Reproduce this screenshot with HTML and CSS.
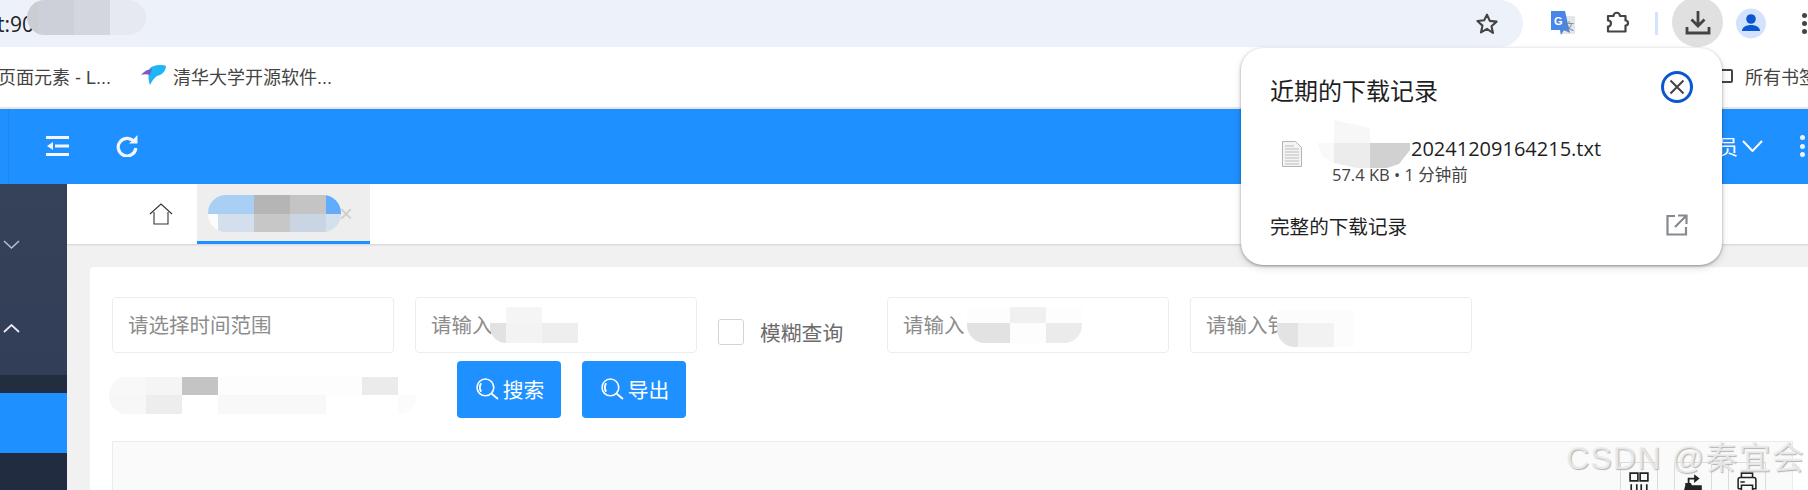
FILE: index.html
```html
<!DOCTYPE html>
<html lang="zh">
<head>
<meta charset="utf-8">
<title>近期的下载记录</title>
<link rel="stylesheet" href="styles.css">
</head>
<body>
<div class="screen">
  <div class="toolbar">
    <div class="omnibox">
      <span class="url">t:90</span>
      <svg class="star" viewBox="0 0 24 24"><path d="M12 2.6l2.8 6.3 6.8.7-5.1 4.6 1.5 6.8L12 16.9l-6 3.5 1.5-6.8-5.1-4.6 6.8-.7z" fill="none" stroke="#444" stroke-width="2.1" stroke-linejoin="round"/></svg>
    </div>
    <svg class="translate" viewBox="0 0 25 24"><rect x="10" y="5" width="15" height="18" fill="#e4e6e8"/><path d="M1 0h14l5 22-6-3-3 5-1-5H1z" fill="#4a86e8"/><text class="translate-g" x="4" y="14">G</text><text class="translate-zh" x="14" y="19">文</text></svg>
    <svg class="puzzle" viewBox="0 0 25 22"><path d="M2 5H7.500a3.200 3.200 0 0 1 6.500 0H19.500V9.500a2.500 2.500 0 0 1 0 5V20.500H2V15.500a3 3 0 0 0 0-6z" fill="none" stroke="#444" stroke-width="2.200" stroke-linejoin="round"/></svg>
    <span class="separator"></span>
    <span class="download-button">
      <svg class="download-icon" viewBox="0 0 26 26"><path d="M13 2v15M6.500 10.500L13 17l6.500-6.500M2 18v6h22v-6" fill="none" stroke="#444" stroke-width="2.800"/></svg>
    </span>
    <svg class="avatar" viewBox="0 0 30 31"><circle cx="15" cy="15.500" r="15" fill="#d3e3fd"/><circle cx="15" cy="11" r="4.800" fill="#0b57d0"/><path d="M6 23c0-4 4.500-6 9-6s9 2 9 6z" fill="#0b57d0"/></svg>
    <span class="kebab kebab-dark"><i></i><i></i><i></i></span>
  </div>

  <div class="bookmarks">
    <span class="bookmark bookmark-first">页面元素 - L...</span>
    <svg class="fish" viewBox="0 0 25 20"><path d="M9 3C13 0 20-1 25 1 25 6 21 10 16 11 13 13 11 16 9 20 7 15 7 8 9 3z" fill="#1fb6f6"/><path d="M0 10C3 6 7 4 11 4L9 10C6 9 3 9 0 10z" fill="#7c5cc4"/></svg>
    <span class="bookmark bookmark-long">清华大学开源软件...</span>
    <span class="bookmark-end"><span class="folder"></span>所有书签</span>
  </div>

  <div class="app">
    <header class="app-header">
      <span class="header-line"></span>
      <svg class="collapse" viewBox="0 0 23 20"><path d="M0 1.500h23M9 10h14M0 18.500h23" stroke="#f2f5fa" stroke-width="3" fill="none"/><path d="M1 10l6-4v8z" fill="#f2f5fa"/></svg>
      <svg class="reload" viewBox="0 0 22 22"><path d="M18.500 7.500A8.800 8.800 0 1 0 19.800 13" fill="none" stroke="#f2f5fa" stroke-width="3.200"/><path d="M13 8.500h8.500V0z" fill="#f2f5fa"/></svg>
      <div class="user">
        <span>管理员</span>
        <svg class="user-chevron" viewBox="0 0 21 12"><path d="M1 1l9.500 10L20 1" fill="none" stroke="#fff" stroke-width="2"/></svg>
        <span class="kebab kebab-light"><i></i><i></i><i></i></span>
      </div>
    </header>

    <div class="app-body">
      <aside class="sidebar">
        <div class="side-group">
          <svg class="side-chevron dim" viewBox="0 0 17 9"><path d="M1 1l7.500 7L16 1" fill="none" stroke="#b9c0cc" stroke-width="1.500"/></svg>
          <svg class="side-chevron" viewBox="0 0 17 9"><path d="M1 8l7.500-7L16 8" fill="none" stroke="#e8ebf0" stroke-width="1.800"/></svg>
        </div>
        <div class="side-dark"></div>
        <div class="side-active"></div>
      </aside>

      <main class="content">
        <nav class="tabs">
          <svg class="home" viewBox="0 0 24 22"><path d="M1 11L12 1l11 10M5 9v12h14V9" fill="none" stroke="#333" stroke-width="1.100"/></svg>
          <div class="tab"><span class="tab-close">×</span></div>
        </nav>

        <section class="card">
          <div class="filters">
            <div class="field">请选择时间范围</div>
            <div class="field">请输入</div>
            <label class="fuzzy"><span class="checkbox"></span><span>模糊查询</span></label>
            <div class="field">请输入</div>
            <div class="field">请输入钅</div>
          </div>
          <div class="actions">
            <button class="btn">
              <svg class="btn-icon" viewBox="0 0 22 21"><circle cx="9" cy="9" r="8" fill="none" stroke="#fff" stroke-width="1.500"/><path d="M5 5a7 7 0 0 0 0 8M15 15l6 5" fill="none" stroke="#fff" stroke-width="1.800"/></svg>搜索
            </button>
            <button class="btn">
              <svg class="btn-icon" viewBox="0 0 22 21"><circle cx="9" cy="9" r="8" fill="none" stroke="#fff" stroke-width="1.500"/><path d="M5 5a7 7 0 0 0 0 8M15 15l6 5" fill="none" stroke="#fff" stroke-width="1.800"/></svg>导出
            </button>
          </div>
          <div class="table">
            <div class="table-tools">
              <span class="tool">
                <svg class="tool-icon" viewBox="0 0 18 18"><path d="M1 1h7v7H1zM10 1h7v7h-7zM2 11v8M7 11v8M11 11v8M16 11v8" fill="none" stroke="#222" stroke-width="1.500"/></svg>
              </span>
              <span class="tool">
                <svg class="tool-icon tool-export" viewBox="0 0 20 20"><path d="M3 10h5l1 2h9v8H1l2-8z" fill="#222"/><path d="M6 10V6h6" fill="none" stroke="#222" stroke-width="1.600"/><path d="M11 2l5 4-5 4z" fill="#222"/></svg>
              </span>
              <span class="tool">
                <svg class="tool-icon" viewBox="0 0 18 18"><path d="M4 5V1h10v4M1 15V7a2 2 0 0 1 2-2h12a2 2 0 0 1 2 2v8h-3M4 15H1M4 12h10v7H4zM3 9h4" fill="none" stroke="#222" stroke-width="1.400"/></svg>
              </span>
            </div>
          </div>
        </section>
      </main>
    </div>
  </div>

  <div class="mosaic m-url"></div>
  <div class="mosaic m-tab"></div>
  <div class="mosaic m-field-two"></div>
  <div class="mosaic m-field-three"></div>
  <div class="mosaic m-field-four"></div>
  <div class="mosaic m-search"></div>

  <aside class="popup">
    <div class="popup-head">
      <h2 class="popup-title">近期的下载记录</h2>
      <svg class="popup-close" viewBox="0 0 32 32"><circle cx="16" cy="16" r="14.500" fill="#fff" stroke="#0b57d0" stroke-width="3"/><path d="M9.500 9.500l13 13M22.500 9.500l-13 13" stroke="#444" stroke-width="2"/></svg>
    </div>
    <div class="popup-file">
      <svg class="file-icon" viewBox="0 0 20 26"><path d="M.5.500h13l6 6v19H.5z" fill="#f4f4f4" stroke="#b4b4b4"/><path d="M3 5h9M3 8h14M3 11h14M3 14h14M3 17h14M3 20h14M3 23h14" stroke="#bdbdbd"/></svg>
      <div class="file-text">
        <div class="file-name">20241209164215.txt</div>
        <div class="file-meta">57.4 KB • 1 分钟前</div>
      </div>
    </div>
    <div class="popup-foot">
      <span>完整的下载记录</span>
      <svg class="open-icon" viewBox="0 0 22 22"><path d="M9 2H1.500v18.500H20V13M12 1.500h8.500V10M20.500 1.500L9 13" fill="none" stroke="#858a8f" stroke-width="2.200"/></svg>
    </div>
    <div class="mosaic m-file"></div>
  </aside>

  <div class="watermark">CSDN @秦宜会</div>
</div>
</body>
</html>
```

FILE: styles.css
```css
* { box-sizing: border-box; }
html, body { margin: 0; padding: 0; background: #fff; }
body { font-family: "Liberation Sans", "Noto Sans CJK SC", sans-serif; }
.screen { position: relative; width: 1808px; height: 490px; overflow: hidden; }

/* browser toolbar */
.toolbar { display: flex; align-items: center; height: 47px; }
.omnibox { display: flex; align-items: center; width: 1523px; height: 47px; padding-right: 24px; background: #edf1fa; border-radius: 0 24px 24px 0; }
.url { margin-left: -3px; font: 21px "Open Sans", sans-serif; color: #202124; }
.star { width: 24px; height: 24px; margin-left: auto; }
.translate { width: 25px; height: 24px; margin-left: 27px; margin-top: -2px; }
.translate-g { font: 700 11px "Liberation Sans", sans-serif; fill: #fff; }
.translate-zh { font: 10px "Noto Sans CJK SC", sans-serif; fill: #6f8a92; }
.puzzle { width: 25px; height: 22px; margin-left: 31px; margin-top: -4px; }
.separator { width: 3px; height: 23px; margin-left: 24px; background: #d3e3fd; }
.download-button { display: flex; align-items: center; justify-content: center; width: 51px; height: 50px; margin-left: 14px; margin-top: -3px; background: #e0e0e0; border-radius: 50%; }
.download-icon { width: 26px; height: 26px; }
.avatar { width: 30px; height: 31px; margin-left: 13px; }
.kebab { display: flex; flex-direction: column; gap: 3.200px; }
.kebab i { display: block; width: 5px; height: 5px; border-radius: 50%; }
.kebab-dark { margin-left: 36px; }
.kebab-dark i { background: #444; }
.kebab-light { margin-left: 37px; }
.kebab-light i { background: #eaf3ff; }

/* bookmarks */
.bookmarks { display: flex; align-items: center; height: 62px; padding-bottom: 2px; border-bottom: 2px solid #e5e5e5; font-size: 18px; color: #444; }
.bookmark { white-space: nowrap; }
.bookmark-first { margin-left: -2px; }
.fish { width: 25px; height: 20px; margin-left: 30px; margin-right: 7px; margin-top: -3px; }
.bookmark-end { display: flex; align-items: center; margin-left: auto; margin-right: -9px; white-space: nowrap; }
.folder { width: 17px; height: 14px; margin-right: 12px; border: 2px solid #444; border-radius: 2px; }

/* app */
.app-header { display: flex; align-items: center; height: 75px; padding-bottom: 1px; background: #1e90ff; }
.header-line { width: 1px; height: 75px; margin-left: 8px; background: #1a86ee; }
.collapse { width: 23px; height: 20px; margin-left: 37px; }
.reload { width: 22px; height: 22px; margin-left: 47px; }
.user { display: flex; align-items: center; margin-left: auto; padding-right: 3px; font-size: 20.800px; color: #fff; white-space: nowrap; }
.user-chevron { width: 21px; height: 12px; margin-left: 4px; }

.app-body { display: flex; height: 306px; }
.sidebar { display: flex; flex: 0 0 67px; flex-direction: column; background: #222c40; }
.side-group { display: flex; flex-direction: column; gap: 75px; height: 191px; padding: 56px 0 0 3px; background: linear-gradient(180deg, #364259, #323e57); }
.side-chevron { width: 17px; height: 9px; }
.side-dark { height: 18px; background: #232d40; }
.side-active { height: 60px; background: #1e90ff; }

.content { flex: 1; min-width: 0; padding-bottom: 0; background: #f1f1f1; }
.tabs { display: flex; height: 60px; padding-left: 82px; background: #fff; box-shadow: 0 1px 2px rgba(0, 0, 0, .14); }
.home { width: 24px; height: 22px; margin-top: 19px; }
.tab { display: flex; align-items: center; justify-content: flex-end; width: 173px; height: 60px; margin-left: 24px; padding: 2px 17px 0 0; background: #eeeeee; border-bottom: 3px solid #1e90ff; }
.tab-close { font-size: 24px; line-height: 1; color: #cfcfcf; }

.card { height: 300px; margin: 23px 0 0 23px; padding: 30px 0 0 22px; background: #fff; border-radius: 4px 0 0 0; }
.filters { display: flex; gap: 21px; }
.field { display: flex; align-items: center; width: 282px; height: 56px; padding: 0 0 2px 15px; border: 1px solid #ebeef0; border-radius: 4px; font-size: 20.500px; color: #8c8c8c; white-space: nowrap; overflow: hidden; }
.fuzzy { display: flex; align-items: center; gap: 16px; width: 148px; padding-top: 14px; font-size: 20.800px; color: #6b6b6b; }
.checkbox { width: 26px; height: 26px; border: 1px solid #d4d4d4; border-radius: 3px; }
.actions { display: flex; gap: 21px; margin-top: 8px; padding-left: 345px; }
.btn { display: flex; align-items: center; justify-content: center; gap: 4px; width: 104px; height: 57px; padding: 0 0 1px 2px; border: 0; border-radius: 4px; background: #1e90ff; color: #fff; font: 20.800px "Liberation Sans", "Noto Sans CJK SC", sans-serif; }
.btn-icon { width: 23px; height: 22px; }
.table { height: 80px; margin: 23px 15px 0 0; padding: 20px 26px 0 0; background: #fafafa; border: 1px solid #ececec; border-bottom: 0; }
.table-tools { display: flex; justify-content: flex-end; gap: 16px; }
.tool { display: flex; justify-content: center; width: 38px; height: 40px; padding-top: 9px; border: 1px solid #dcdcdc; border-bottom: 0; }
.tool-icon { flex: none; width: 20px; height: 20px; }
.tool-export { width: 22px; height: 22px; }

/* pixelated privacy patches painted over the page */
.mosaic { position: absolute; }
.m-url { left: 27px; top: 0; width: 119px; height: 35px; border-radius: 18px; background: linear-gradient(90deg, #cbcdd3 11px, #cdd0d8 11px 47px, #d3d6df 47px 83px, #e6e9f1 83px); }
.m-tab { left: 208px; top: 195px; width: 133px; height: 37px; border-radius: 18px;
  background:
    linear-gradient(90deg, #a9cff5 46px, #b5b5b5 46px 82px, #c4c4c4 82px 118px, #62adfb 118px) top / 100% 19px no-repeat,
    linear-gradient(90deg, #fbfcfd 10px, #d3dfed 10px 46px, #c7c7c7 46px 82px, #c9d5e2 82px 118px, #d3e0ee 118px) bottom / 100% 18px no-repeat; }
.m-field-two { left: 490px; top: 307px; width: 88px; height: 36px; border-radius: 0 0 0 16px;
  background:
    linear-gradient(90deg, transparent 16px, #f5f5f5 16px 52px, transparent 52px) top / 100% 16px no-repeat,
    linear-gradient(90deg, #e2e2e2 16px, #f3f3f3 16px 52px, #eeeeee 52px) bottom / 100% 20px no-repeat; }
.m-field-three { left: 967px; top: 307px; width: 115px; height: 36px; border-radius: 0 0 18px 18px;
  background:
    linear-gradient(90deg, #fdfdfd 43px, #f0f0f0 43px 79px, #fdfdfd 79px) top / 100% 16px no-repeat,
    linear-gradient(90deg, #e2e2e2 43px, #fdfdfd 43px 79px, #ebebeb 79px) bottom / 100% 20px no-repeat; }
.m-field-four { left: 1277px; top: 310px; width: 77px; height: 37px; border-radius: 0 0 0 18px;
  background:
    linear-gradient(90deg, #fcfcfc, #fcfcfc) top / 100% 13px no-repeat,
    linear-gradient(90deg, #e3e3e3 21px, #f2f2f2 21px 57px, #fcfcfc 57px) bottom / 100% 24px no-repeat; }
.m-search { left: 109px; top: 377px; width: 307px; height: 37px; border-radius: 18px;
  background:
    linear-gradient(90deg, #f8f8f8 37px, #f5f5f5 37px 73px, #c4c4c4 73px 109px, #fdfdfd 109px 253px, #ebebeb 253px 289px, #fff 289px) top / 100% 18px no-repeat,
    linear-gradient(90deg, #f7f7f7 37px, #ededed 37px 73px, #fff 73px 109px, #f8f8f8 109px 217px, #fff 217px 289px, #fbfbfb 289px) bottom / 100% 19px no-repeat; }

/* downloads bubble */
.popup { position: absolute; left: 1241px; top: 48px; width: 481px; height: 217px; padding: 0 29px; background: #fff; border-radius: 22px; box-shadow: 0 1px 3px rgba(0, 0, 0, .35), 0 3px 8px rgba(0, 0, 0, .12); color: #1f1f1f; }
.popup-head { display: flex; justify-content: space-between; height: 88px; }
.popup-title { height: 32px; margin: 28px 0 0; font-size: 24px; font-weight: 400; line-height: 32px; color: #1f1f1f; }
.popup-close { width: 32px; height: 32px; margin-top: 23px; }
.popup-file { display: flex; height: 74px; padding-left: 12px; }
.file-icon { width: 20px; height: 26px; margin-top: 5px; }
.file-text { margin-left: 30px; font-family: "Open Sans", "Noto Sans CJK SC", sans-serif; }
.file-name { height: 24px; margin: 1px 0 0 79px; font-size: 20px; line-height: 24px; color: #1f1f1f; white-space: nowrap; }
.file-meta { margin-top: 3px; font-size: 16.500px; line-height: 22px; color: #444; white-space: nowrap; }
.popup-foot { display: flex; align-items: center; justify-content: space-between; height: 30px; font-size: 19.600px; }
.open-icon { width: 22px; height: 22px; margin-right: 5px; }
.m-file { left: 76px; top: 72px; width: 93px; height: 48px; clip-path: polygon(17px 23px, 17px 0, 53px 8px, 53px 23px, 93px 23px, 93px 30px, 82px 44px, 70px 48px, 40px 48px, 17px 43px, 5px 36px, 0 23px);
  background:
    linear-gradient(90deg, #f7f7f7, #f7f7f7) top / 100% 23px no-repeat,
    linear-gradient(90deg, #f9f9f9 17px, #ececec 17px 53px, #d1d1d1 53px) bottom / 100% 25px no-repeat; }

.watermark { position: absolute; left: 1566px; top: 439px; font-size: 32px; letter-spacing: 1.200px; line-height: 38px; color: rgba(238, 238, 238, .85); text-shadow: 1px 1px 1px #b4b4b4; white-space: nowrap; }
```
